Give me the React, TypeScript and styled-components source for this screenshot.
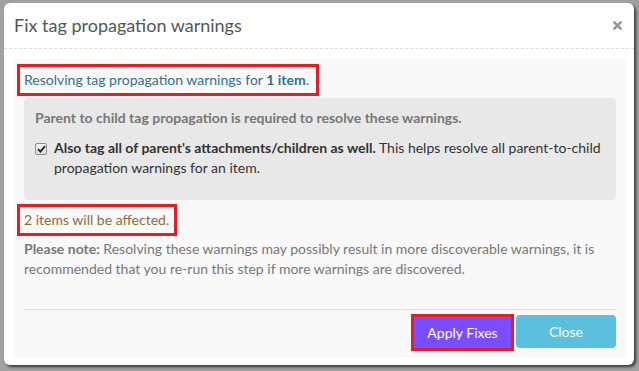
import React from "react";
import styled, { createGlobalStyle } from "styled-components";
import { FaTimes } from "react-icons/fa";

const GlobalStyle = createGlobalStyle`
  html, body {
    margin: 0;
    padding: 0;
    background: #a1a1a1;
    font-family: Lato, "Open Sans", sans-serif;
  }
`;

const Backdrop = styled.div`
  min-height: 100vh;
  padding: 3px 5px 0 4px;
  box-sizing: border-box;
  background: #a1a1a1;
`;

const Modal = styled.div`
  width: 630px;
  background: #ffffff;
  border-radius: 6px;
  box-shadow: 2px 2px 3px rgba(0, 0, 0, 0.65);
  display: flex;
  flex-direction: column;
`;

const Header = styled.div`
  display: flex;
  justify-content: space-between;
  align-items: center;
  padding: 11px 10px 12px 10px;
  border-bottom: 1px dashed #dcdcdc;
`;

const Title = styled.h4`
  margin: 0;
  font-size: 18px;
  line-height: 22px;
  font-weight: 400;
  color: #555;
`;

const CloseIcon = styled.button`
  border: none;
  background: none;
  padding: 0;
  display: flex;
  color: #939393;
  cursor: pointer;
`;

const Panel = styled.div`
  margin: 10px 8px 7px 10px;
  padding: 5px 10px 10px;
  background: #f9f9f9;
  border-radius: 4px;
  font-size: 14px;
  color: #777;
`;

const Marked = styled.div<{ $color: string; $pad: number }>`
  display: inline-block;
  border: 3px solid #e51d25;
  margin-left: -7px;
  padding: 0 ${(p) => p.$pad}px 0 4px;
  line-height: 26px;
  color: ${(p) => p.$color};
`;

const Notice = styled.div`
  margin-top: 2px;
  padding: 10px 8px 22px 11px;
  background: #e8e8e8;
  border-radius: 4px;
`;

const NoticeHeading = styled.div`
  font-weight: 700;
  line-height: 20px;
  color: #777;
`;

const CheckRow = styled.label`
  display: flex;
  margin-top: 10px;
  line-height: 20px;
  color: #333;
`;

const CheckBox = styled.span`
  flex: none;
  width: 10px;
  height: 10px;
  margin: 5px 7px 0 0;
  border: 1px solid #8d8d8d;
  border-radius: 2px;
  background: linear-gradient(#f4f4f4, #dcdcdc);
  display: flex;
  align-items: center;
  justify-content: center;
`;

const Affected = styled.div`
  margin-top: 4px;
`;

const Note = styled.p`
  margin: 3px 0 0;
  line-height: 20px;
  color: #777;
`;

const Footer = styled.div`
  display: flex;
  justify-content: flex-end;
  align-items: flex-end;
  gap: 5px;
  margin-top: 30px;
  padding-top: 5px;
  border-top: 1px solid #dddddd;
`;

const Button = styled.button<{ $bg: string; $marked?: boolean }>`
  font-family: Lato, "Open Sans", sans-serif;
  font-size: 14px;
  color: #fff;
  background: ${(p) => p.$bg};
  border: none;
  border-radius: ${(p) => (p.$marked ? "0" : "4px")};
  width: ${(p) => (p.$marked ? "97px" : "100px")};
  height: ${(p) => (p.$marked ? "31px" : "33px")};
  outline: ${(p) => (p.$marked ? "3px solid #e51d25" : "none")};
  padding: 0;
  cursor: pointer;
`;

const Check = () => (
  <svg width="9" height="8" viewBox="0 0 9 8">
    <path d="M1 4.2 L3.4 6.6 L8 1.2" fill="none" stroke="#222" strokeWidth="1.8" />
  </svg>
);

export default function App() {
  return (
    <Backdrop>
      <GlobalStyle />
      <Modal>
        <Header>
          <Title>Fix tag propagation warnings</Title>
          <CloseIcon aria-label="close">
            <FaTimes size={13} />
          </CloseIcon>
        </Header>
        <Panel>
          <Marked $color="#31708f" $pad={7}>
            Resolving tag propagation warnings for <b>1 item</b>.
          </Marked>
          <Notice>
            <NoticeHeading>
              Parent to child tag propagation is required to resolve these warnings.
            </NoticeHeading>
            <CheckRow>
              <CheckBox>
                <Check />
              </CheckBox>
              <span>
                <b>Also tag all of parent's attachments/children as well.</b> This helps
                resolve all parent-to-child propagation warnings for an item.
              </span>
            </CheckRow>
          </Notice>
          <Affected>
            <Marked $color="#8a6d3b" $pad={5}>
              2 items will be affected.
            </Marked>
          </Affected>
          <Note>
            <b>Please note:</b> Resolving these warnings may possibly result in more
            discoverable warnings, it is recommended that you re-run this step if more
            warnings are discovered.
          </Note>
          <Footer>
            <Button $bg="#7c4dff" $marked>
              Apply Fixes
            </Button>
            <Button $bg="#5bc0de">Close</Button>
          </Footer>
        </Panel>
      </Modal>
    </Backdrop>
  );
}
